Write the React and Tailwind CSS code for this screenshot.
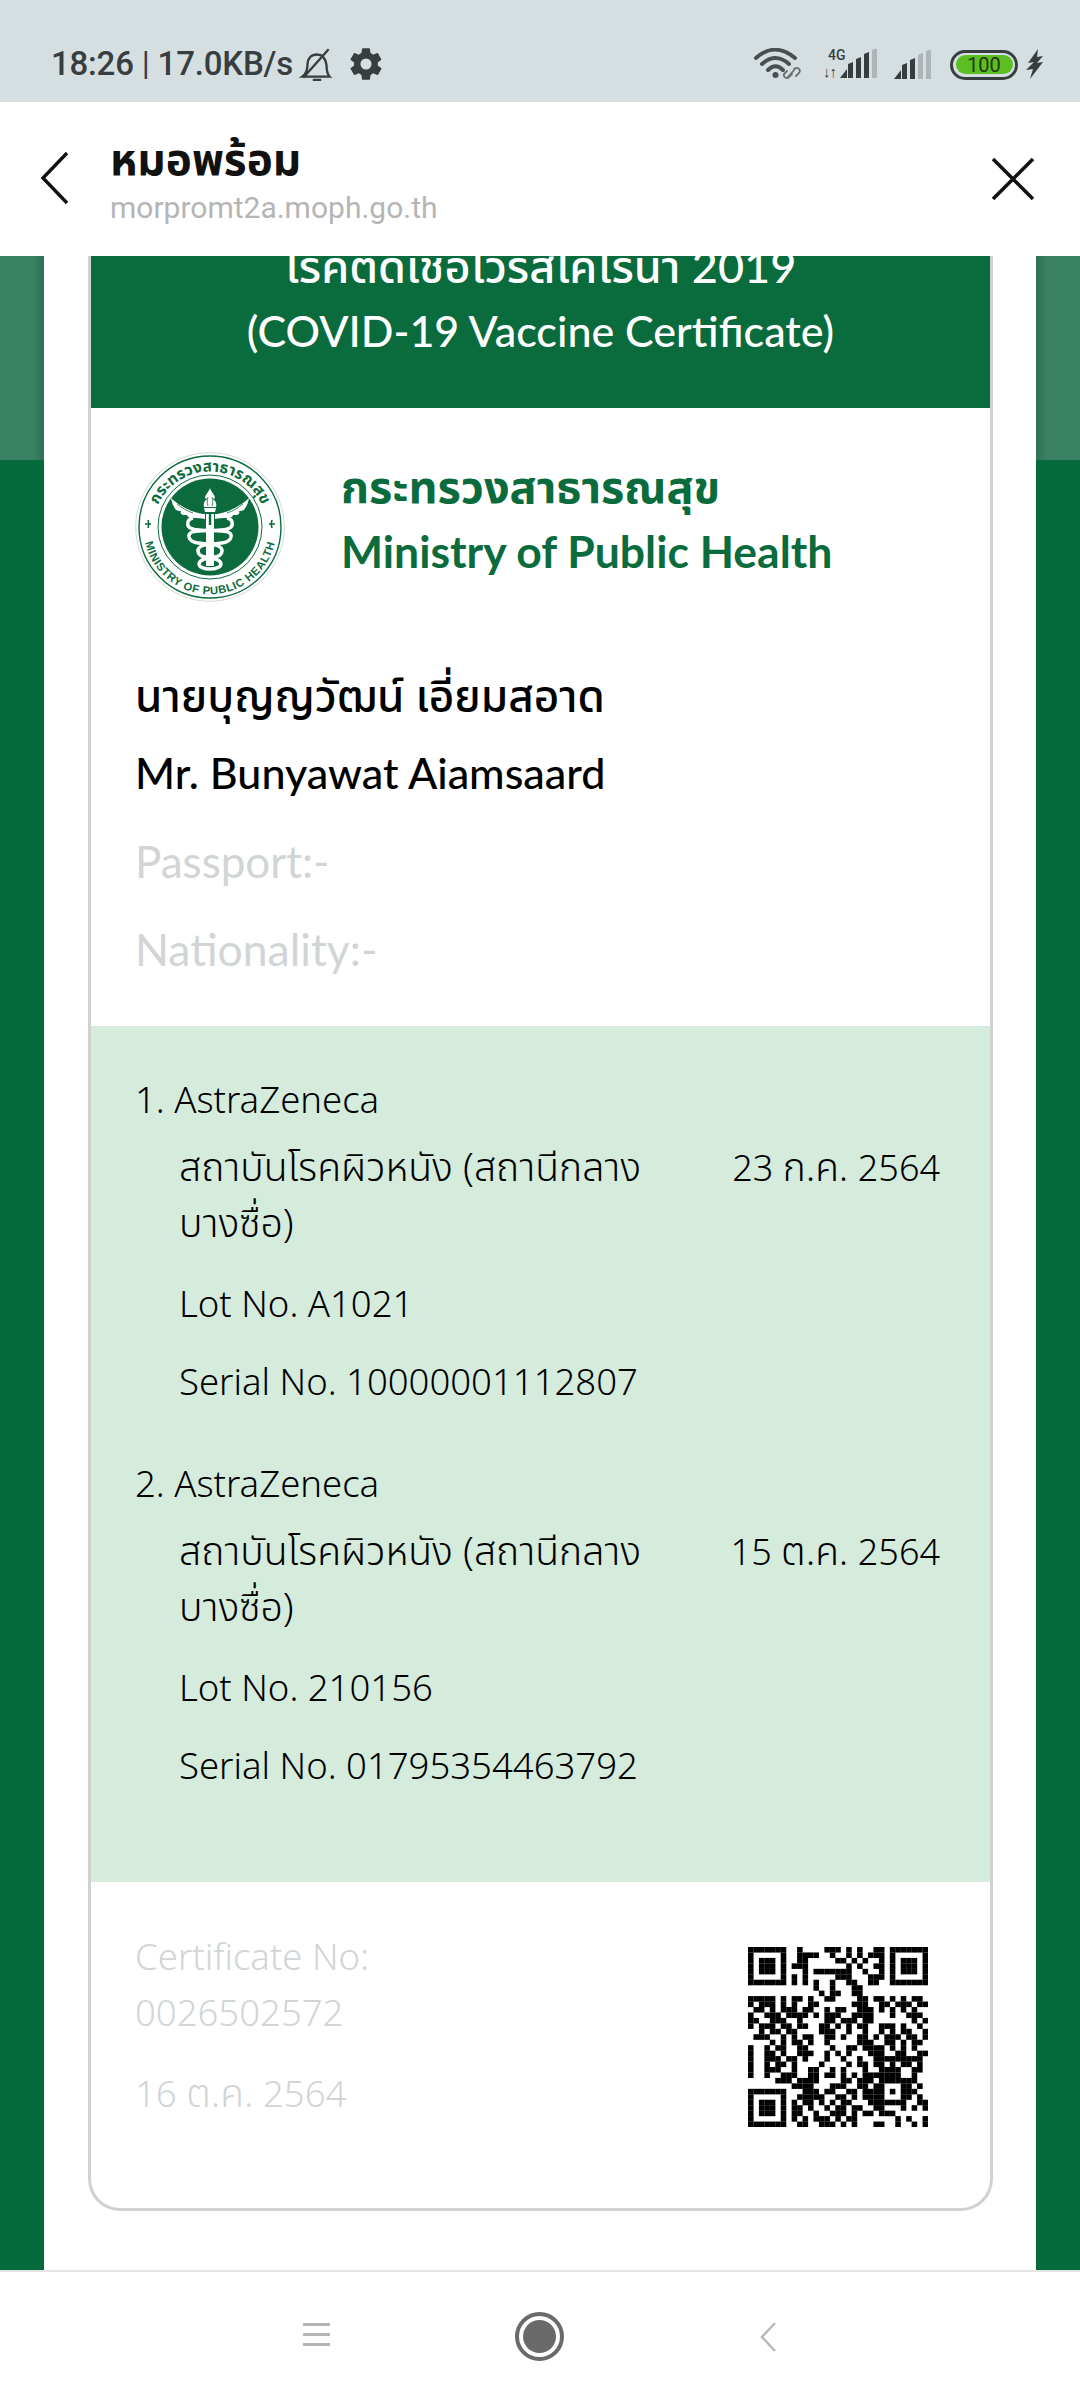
const QR = [
"000000000100001110101001100000000",
"000000000111100100101011100000000",
"000000000110000011010100100000000",
"000000001110000000101001100000000",
"000000000010111111100100100000000",
"000000001010000011100011100000000",
"000000001010100100110011000000000",
"000000000000100100011000000000000",
"000000000000010110011000000000000",
"111110101101001100001101101010110",
"101110101001100000011100110111011",
"011010111011001011001110101010100",
"100111011110101110011110001001110",
"110011100100001101110110000000101",
"101110110110011010101100111010010",
"001011011000011100100100101011001",
"011100101011001101001101011101101",
"000010101101001000001110011010110",
"100101100110000100110111101010100",
"100110100111001010100011100110011",
"100111011010001001001001111111110",
"100101101000010000101101101011010",
"100111001001100101000100111100110",
"100100111001101101010111111100100",
"000001110111100001101110000011100",
"000000001111000111001101000001010",
"000000000011101100110111010101100",
"000000000111110011010111000001010",
"000000001011010101100011111110011",
"000000001101001011011001100010101",
"000000001100100111010110111000000",
"000000001010111010110000000101001",
"000000000110011101010001100100101",
];

function paintFinder(m, x, y) {
  for (let r = 0; r < 7; r++) for (let c = 0; c < 7; c++) {
    const on = r === 0 || r === 6 || c === 0 || c === 6 || (r >= 2 && r <= 4 && c >= 2 && c <= 4);
    m[y + r][x + c] = on;
  }
}
function buildQr() {
  const m = QR.map((s) => s.padEnd(33, "0").slice(0, 33).split("").map((v) => v === "1"));
  paintFinder(m, 0, 0);
  paintFinder(m, 26, 0);
  paintFinder(m, 0, 26);
  for (let r = 0; r < 5; r++) for (let c = 0; c < 5; c++) {
    m[24 + r][24 + c] = r === 0 || r === 4 || c === 0 || c === 4 || (r === 2 && c === 2);
  }
  return m;
}

function QrCode() {
  const m = buildQr();
  return (
    <svg width="180" height="180" viewBox="0 0 33 33" className="block">
      {m.map((row, y) => row.map((on, x) => on ? <rect key={x + "-" + y} x={x} y={y} width="1.02" height="1.02" fill="#000" /> : null))}
    </svg>
  );
}

function Emblem() {
  const g = "#0b6b3d";
  return (
    <svg width="150" height="150" viewBox="0 0 150 150" className="block shrink-0">
      <defs>
        <path id="arcTop" d="M 18.5 84 A 57 57 0 1 1 131.5 84" />
        <path id="arcBot" d="M 9 84 A 66.5 66.5 0 0 0 141 84" />
      </defs>
      <circle cx="75" cy="75" r="74.3" fill="#fff" stroke="#c9d6cf" strokeWidth="0.9" />
      <circle cx="75" cy="75" r="71" fill="none" stroke={g} strokeWidth="1.4" />
      <circle cx="75" cy="75" r="52" fill="none" stroke={g} strokeWidth="1" />
      <circle cx="75" cy="75" r="48.5" fill={g} />
      <text fontFamily="'Noto Sans Thai','Noto Sans','DejaVu Sans',sans-serif" fontWeight="700" fontSize="15.5" fill={g}>
        <textPath href="#arcTop" startOffset="50%" textAnchor="middle">กระทรวงสาธารณสุข</textPath>
      </text>
      <text fontFamily="'Liberation Sans',sans-serif" fontWeight="700" fontSize="11.2" fill={g} letterSpacing="0.6">
        <textPath href="#arcBot" startOffset="50%" textAnchor="middle">MINISTRY OF PUBLIC HEALTH</textPath>
      </text>
      <path d="M13 68c1 3 1 5 0 8M10 72l6 0M137 68c-1 3-1 5 0 8M134 72l6 0" stroke={g} strokeWidth="1.6" fill="none" />
      <path d="M75 36c-1 4-5 6-5 11 0-1 2-1 2 0-3 2-4 5-3 8h12c1-3 0-6-3-8 0-1 2-1 2 0 0-5-4-7-5-11z" fill="#fff" />
      <path d="M69 56h12l-1 4H70z" fill="#fff" />
      <path d="M73 45c-1 3-1 6 0 9M77 45c1 3 1 6 0 9" stroke={g} strokeWidth="0.8" fill="none" />
      <path d="M70 62C60 62 44 54 36 46c1 6 3 9 5 12 2 1 4 1 5 1-1 2 0 3 2 4 2 0 3 0 4 0 0 2 3 3 6 3 4 0 9 0 12 1z" fill="#fff" />
      <path d="M80 62C90 62 106 54 114 46c-1 6-3 9-5 12-2 1-4 1-5 1 1 2 0 3-2 4-2 0-3 0-4 0 0 2-3 3-6 3-4 0-9 0-12 1z" fill="#fff" />
      <path d="M42 52c5 4 10 7 16 9M108 52c-5 4-10 7-16 9" stroke={g} strokeWidth="0.8" fill="none" />
      <rect x="71" y="62" width="8" height="52" fill="#fff" />
      <rect x="73.8" y="62" width="2.4" height="11" fill={g} />
      <path d="M58 66c-6 1-8 9 0 11 6 2 30 1 35 3 6 3 3 10-6 11-8 1-18 1-22 4-4 3-2 9 5 10 8 1 16 2 16 7 0 3-5 5-11 5" stroke="#fff" strokeWidth="3.4" fill="none" />
      <path d="M92 66c6 1 8 9 0 11-6 2-30 1-35 3-6 3-3 10 6 11 8 1 18 1 22 4 4 3 2 9-5 10-8 1-16 2-16 7 0 3 5 5 11 5" stroke="#fff" strokeWidth="3.4" fill="none" />
    </svg>
  );
}

function Dose({ n, lot, serial, date, dateThai }) {
  return (
    <div>
      <div className="h-[68px] leading-[68px]">{n}. AstraZeneca</div>
      <div className="pl-[44px] mt-[5px]">
        <div className="flex justify-between pr-[50px]">
          <div className="w-[480px] leading-[56px] text-[39.200px]">สถาบันโรคผิวหนัง (สถานีกลางบางซื่อ)</div>
          <div className="leading-[56px] text-[36px]">{date[0]} <span className="text-[39px]">{dateThai}</span> {date[1]}</div>
        </div>
        <div className="mt-[26px] h-[54px] leading-[54px]">Lot No. {lot}</div>
        <div className="mt-[24px] h-[54px] leading-[54px]">Serial No. {serial}</div>
      </div>
    </div>
  );
}

function SideStrip({ side }) {
  return (
    <div className="w-[44px] shrink-0 flex flex-col bg-[#066b3c]">
      {side === "left"
        ? <div className="h-[204px] bg-gradient-to-r from-[#3b8163] from-75% to-[#2f6f53]" />
        : <div className="h-[204px] bg-gradient-to-l from-[#3b8163] from-75% to-[#2f6f53]" />}
    </div>
  );
}

function SignalBars({ on }) {
  const hs = [9, 15, 20, 25, 29];
  return (
    <svg width="40" height="30" viewBox="0 0 40 30" className="block">
      {hs.map((h, i) => (
        <path
          key={i}
          d={i === 0 ? `M0 29 L7 ${29 - h} L7 29 Z` : `M${i * 8} 29 V${29 - h + 1} L${i * 8 + 5} ${29 - h - 1} V29 Z`}
          fill={i < on ? "#383d3f" : "#aeb5b8"}
        />
      ))}
    </svg>
  );
}

export default function App() {
  return (
    <div className="w-[1080px] h-[2400px] flex flex-col overflow-hidden bg-white font-['Lato','Noto_Sans_Thai','Noto_Sans',sans-serif]">
      {/* status bar */}
      <div className="h-[102px] shrink-0 bg-[#d5dee1] flex items-center pl-[51px] pr-[36px] pt-[26px] text-[#383d3f] font-['Roboto',sans-serif]">
        <span className="text-[33px] font-medium tracking-[-0.2px] whitespace-nowrap">18:26 <span className="font-normal">|</span> 17.0KB/s</span>
        <svg width="36" height="36" viewBox="0 0 34 34" className="ml-[6px]" fill="none" stroke="#383d3f" strokeWidth="2.2">
          <path d="M3 29c3-2 5-5 5-11 0-7 4-10 9-10s8 3 9 10c0 6 1 9 3 11zM13 32h8M4 30L28 3" />
        </svg>
        <svg width="38" height="38" viewBox="0 0 24 24" className="ml-[12px]" fill="#383d3f">
          <path d="M19.4 13c0-.3.1-.6.1-1s0-.7-.1-1l2.1-1.6c.2-.2.2-.4.1-.6l-2-3.5c-.1-.2-.4-.3-.6-.2l-2.5 1c-.5-.4-1.100-.7-1.700-1L14.500 2.400C14.500 2.200 14.300 2 14 2h-4c-.3 0-.5.200-.5.400L9.100 5.100c-.6.300-1.200.6-1.700 1l-2.500-1c-.2-.1-.5 0-.6.2l-2 3.500c-.1.200-.1.500.1.600L4.500 11c0 .3-.1.700-.1 1s0 .7.1 1l-2.100 1.600c-.2.200-.2.400-.1.600l2 3.500c.1.200.4.300.6.200l2.500-1c.5.400 1.100.7 1.700 1l.4 2.700c0 .2.200.4.500.4h4c.3 0 .5-.2.500-.4l.4-2.700c.6-.3 1.200-.6 1.700-1l2.500 1c.2.100.5 0 .6-.2l2-3.500c.1-.2.100-.4-.1-.6zM12 15.500a3.500 3.500 0 1 1 0-7 3.500 3.500 0 0 1 0 7z" />
        </svg>
        <div className="flex-1" />
        <div className="relative w-[48px] h-[32px]">
          <svg width="48" height="32" viewBox="0 0 48 32" fill="none" stroke="#4a4f51" strokeWidth="4" strokeLinecap="round">
            <path d="M2 10C14 -1 28 -1 41 10" />
            <path d="M8 16C17 8 26 8 35 16" />
            <path d="M14 22C19 17 24 17 29 22" />
            <circle cx="21.500" cy="27" r="3" fill="#4a4f51" stroke="none" />
            <path d="M33 30l8-9m-1 0a3 3 0 0 1 5 4l-3 3M38 26l-3 3a3 3 0 0 1-5-3l3-3" stroke="#6b7072" strokeWidth="1.800" />
          </svg>
        </div>
        <div className="relative w-[57px] h-[32px] ml-[21px] text-[14px] font-medium">
          <span className="absolute left-[5px] -top-[3px]">4G</span>
          <span className="absolute left-0 bottom-[0px] text-[15px] leading-[15px] font-bold tracking-[-1px]">↓↑</span>
          <div className="absolute left-[17px] top-[1px]"><SignalBars on={4} /></div>
        </div>
        <div className="ml-[14px] mt-[2px]"><SignalBars on={3} /></div>
        <div className="ml-[16px] w-[68px] h-[30px] rounded-full border-[3.4px] border-[#383d3f] p-[2.500px] mt-[1px]">
          <div className="h-full w-full rounded-full bg-[#5bbf21] flex items-center justify-center text-[20px] leading-none text-[#253515] font-normal">100</div>
        </div>
        <svg width="18" height="30" viewBox="0 0 18 30" className="ml-[8px]" fill="#383d3f">
          <path d="M12 0L2 14l6-1-8 8 7-1-3 10L17 13l-6 1 6-7-6 1z" />
        </svg>
      </div>

      {/* browser header */}
      <div className="h-[154px] shrink-0 bg-white flex items-center">
        <svg width="30" height="58" viewBox="0 0 30 58" className="ml-[40px] shrink-0" fill="none" stroke="#111" strokeWidth="3.400">
          <path d="M27 3L3 28l24 25" />
        </svg>
        <div className="ml-[40px] flex-1 mt-[4px]">
          <div className="h-[44px] leading-[44px] text-[44px] font-bold text-[#111]">หมอพร้อม</div>
          <div className="h-[36px] mt-[10px] leading-[36px] text-[30px] text-[#b5b5b5] font-['Roboto',sans-serif]">morpromt2a.moph.go.th</div>
        </div>
        <svg width="44" height="44" viewBox="0 0 44 44" className="mr-[45px] shrink-0" fill="none" stroke="#111" strokeWidth="3.600">
          <path d="M2 2l40 40M42 2L2 42" />
        </svg>
      </div>

      {/* page */}
      <div className="flex-1 min-h-0 flex overflow-hidden">
        <SideStrip side="left" />
        <div className="flex-1 bg-white pl-[44px] pr-[43px] overflow-hidden">
          <div className="h-[1955px] rounded-b-[32px] border-x-[3px] border-b-[3px] border-[#cfd2d1] overflow-hidden text-black">
            <div className="h-[152px] bg-[#0a6b3d] text-white text-center text-[45px] font-medium overflow-hidden">
              <div className="-mt-[18px] h-[56px] leading-[56px]">โรคติดเชื้อไวรัสโคโรนา 2019</div>
              <div className="mt-[9px] h-[56px] leading-[56px] text-[43px]">(COVID-19 Vaccine Certificate)</div>
            </div>
            <div className="h-[618px] pl-[44px] bg-white">
              <div className="flex items-center pt-[44px]">
                <Emblem />
                <div className="ml-[56px] -mt-[18px] text-[#0a6b3d] text-[45px] font-bold">
                  <div className="h-[65px] leading-[65px]">กระทรวงสาธารณสุข</div>
                  <div className="h-[64px] leading-[64px] text-[44.500px]">Ministry of Public Health</div>
                </div>
              </div>
              <div className="mt-[53px] text-[44px] font-medium">
                <div className="h-[80px] leading-[80px]">นายบุญญวัฒน์ เอี่ยมสอาด</div>
                <div className="h-[76px] leading-[76px] text-[43px]">Mr. Bunyawat Aiamsaard</div>
              </div>
              <div className="mt-[6px] text-[44px] text-[#d1d5d6]">
                <div className="h-[88px] leading-[88px]">Passport:-</div>
                <div className="h-[87px] leading-[87px] text-[44.500px]">Nationality:-</div>
              </div>
            </div>
            <div className="h-[856px] bg-[#d5ebdc] pl-[44px] pt-[39px] text-[36.500px] font-light flex flex-col gap-[41px] font-['Noto_Sans','Noto_Sans_Thai',sans-serif]">
              <Dose n={1} lot="A1021" serial="10000001112807" date={["23", "2564"]} dateThai="ก.ค." />
              <Dose n={2} lot="210156" serial="01795354463792" date={["15", "2564"]} dateThai="ต.ค." />
            </div>
            <div className="flex justify-between pl-[44px] pr-[62px] pt-[49px] bg-white">
              <div className="text-[36.500px] text-[#d1d5d6] font-light font-['Noto_Sans','Noto_Sans_Thai',sans-serif] -mt-[3px]">
                <div className="h-[56px] leading-[56px]">Certificate No:</div>
                <div className="h-[54px] leading-[54px] mt-[1px]">0026502572</div>
                <div className="h-[54px] leading-[54px] mt-[26px]">16 <span className="text-[39px]">ต.ค.</span> 2564</div>
              </div>
              <div className="mt-[16px]"><QrCode /></div>
            </div>
          </div>
        </div>
        <SideStrip side="right" />
      </div>

      {/* nav bar */}
      <div className="h-[130px] shrink-0 bg-white border-t-[2px] border-[#e3e5e4] flex items-center relative">
        <div className="absolute left-[303px] top-[51px] w-[27px] flex flex-col gap-[7px]">
          <div className="h-[3px] bg-[#b4b4b4]" />
          <div className="h-[3px] bg-[#b4b4b4]" />
          <div className="h-[3px] bg-[#b4b4b4]" />
        </div>
        <div className="absolute left-[515px] top-[40px] w-[49px] h-[49px] rounded-full border-[4px] border-[#6a6a6a] p-[4px]">
          <div className="w-full h-full rounded-full bg-[#6a6a6a]" />
        </div>
        <svg width="18" height="30" viewBox="0 0 18 30" className="absolute left-[759px] top-[50px]" fill="none" stroke="#b9b9b9" strokeWidth="2.500">
          <path d="M16 1L3 15l13 14" />
        </svg>
      </div>
    </div>
  );
}
